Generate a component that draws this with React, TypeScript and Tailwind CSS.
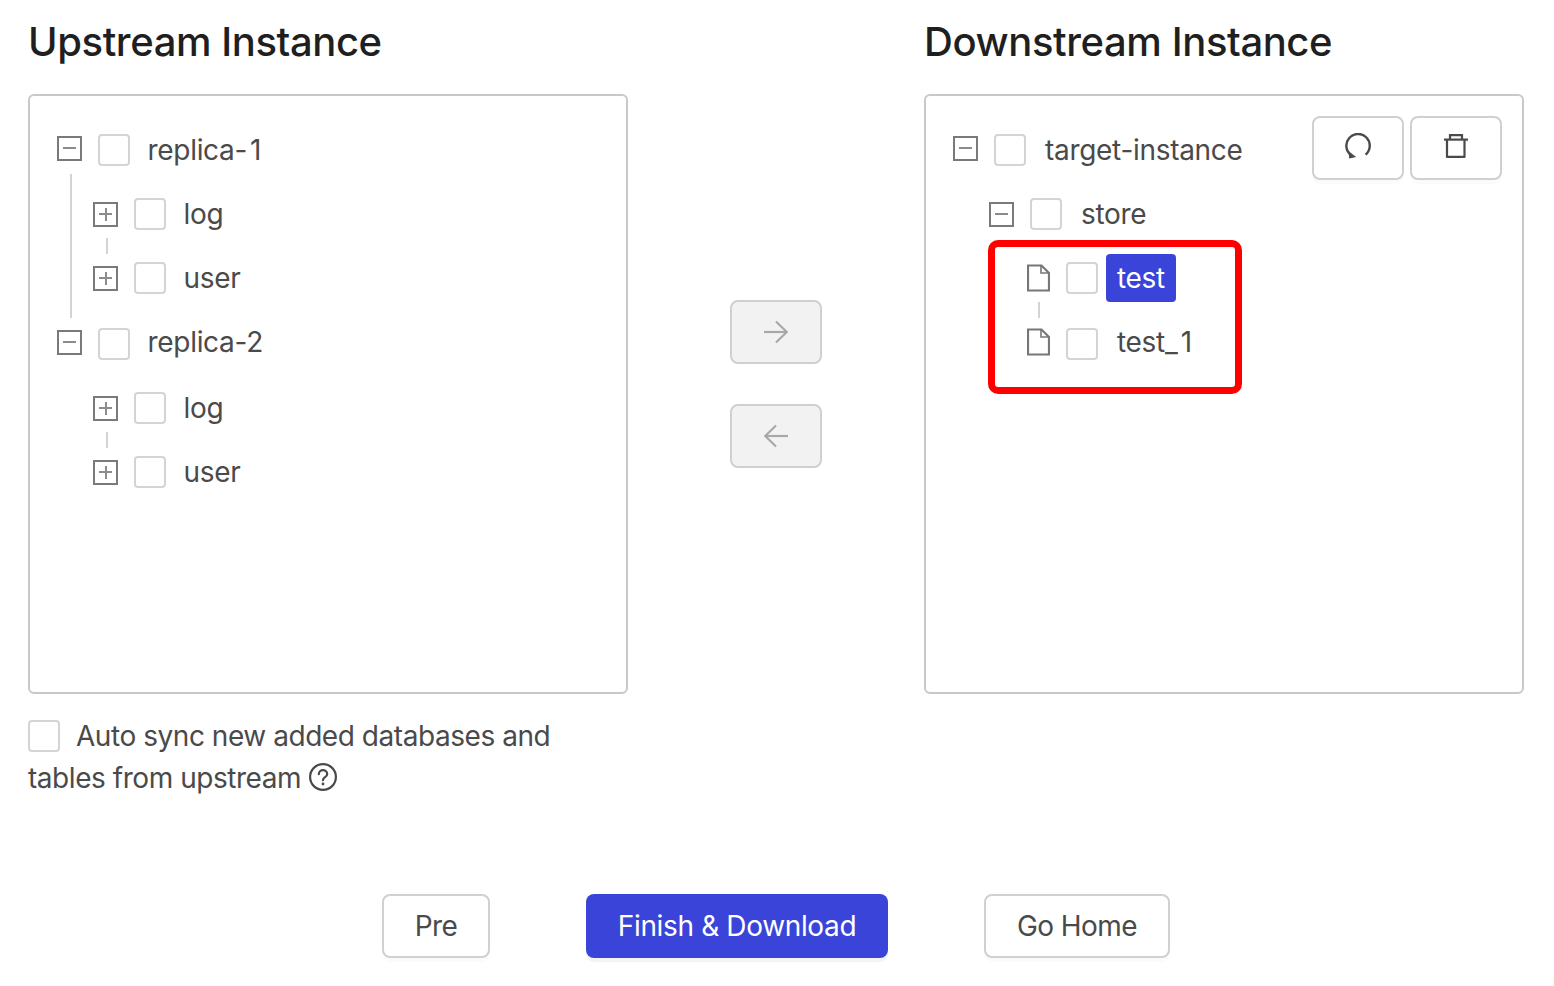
import type { ReactNode } from 'react'

const Checkbox = ({ low }: { low?: boolean }) => (
    <span
        className={
            'box-border block size-8 shrink-0 rounded-[4px] border-2 border-[#d4d4d4] bg-white ' + (low ? 'mt-1' : '')
        }
    />
)

const Switcher = ({ open, raised }: { open: boolean; raised?: boolean }) => (
    <span
        className={
            'relative -ml-px box-border block size-[25px] border-2 border-[#7a7a7a] bg-white ' +
            (raised ? '-mt-1' : '')
        }
    >
        <span className="absolute top-[9.5px] left-[4px] h-[2px] w-[13px] bg-[#8c8c8c]" />
        {!open && <span className="absolute top-[4px] left-[9.5px] h-[13px] w-[2px] bg-[#8c8c8c]" />}
    </span>
)

const FileIcon = () => (
    <svg width="23" height="28" viewBox="0 0 23 28" fill="none" stroke="#777" strokeWidth="2.2" className="ml-px -mt-px">
        <path d="M1 1.5h13.5l7.5 7.5v17.5H1z" />
        <path d="M14 1.5V9h8" strokeWidth="1.6" />
    </svg>
)

const Row = ({
    level,
    label,
    open,
    leaf,
    raised,
    low,
    tight,
    selected,
    className,
}: {
    level: 0 | 1 | 2
    label: ReactNode
    open?: boolean
    leaf?: boolean
    raised?: boolean
    low?: boolean
    tight?: boolean
    selected?: boolean
    className?: string
}) => {
    const indent = level === 0 ? '' : level === 1 ? 'pl-9' : 'pl-[72px]'
    return (
        <div className={'relative flex h-16 items-center ' + indent + ' ' + (className ?? '')}>
            <span className="flex w-10 shrink-0 items-center">
                {leaf ? <FileIcon /> : <Switcher open={!!open} raised={raised} />}
            </span>
            <Checkbox low={low} />
            <span
                className={
                    'flex h-12 items-center rounded-[4px] px-[11px] tracking-[-0.3px] ' +
                    (tight ? 'ml-[6.5px] ' : 'ml-2 ') +
                    (selected ? 'bg-[#3a44d8] text-white' : '')
                }
            >
                {label}
            </span>
        </div>
    )
}

const IconButton = ({ children }: { children: ReactNode }) => (
    <button className="flex h-16 w-[92px] items-center justify-center rounded-lg border-2 border-[#d0d0d0] bg-white shadow-[0_4px_0_rgba(0,0,0,0.015)]">
        {children}
    </button>
)

const MoveButton = ({ children }: { children: ReactNode }) => (
    <button className="flex h-16 w-[92px] items-center justify-center rounded-lg border-2 border-[#d0d0d0] bg-[#f2f2f2]">
        {children}
    </button>
)

const Title = ({ children }: { children: ReactNode }) => (
    <h2 className="mb-[10px] flex h-[84px] items-center text-[40px] font-medium tracking-[-0.41px] text-[#1f1f1f]">
        {children}
    </h2>
)

const panel = 'box-border h-[600px] w-[600px] rounded-md border-2 border-[#c8c8c8] bg-white'

export default function App() {
    return (
        <div
            className="min-h-[986px] bg-white pl-7 text-[28px] text-[#4a4a4a]"
            style={{ fontFamily: 'Inter, "Liberation Sans", sans-serif' }}
        >
            <div className="flex">
                <div className="w-[600px] shrink-0">
                    <Title>Upstream Instance</Title>
                    <div className={panel + ' pt-[22px] pl-7'}>
                        <div className="relative">
                            <span className="absolute top-14 left-3 h-36 w-[2px] bg-[#d4d4d4]" />
                            <Row
                                level={0}
                                open
                                raised
                                tight
                                label={
                                    <>
                                        replica<span className="tracking-[2.5px]">-</span>1
                                    </>
                                }
                            />
                            <Row level={1} label="log" tight />
                            <span className="absolute top-[120px] left-12 h-4 w-[2px] bg-[#d4d4d4]" />
                            <Row level={1} label="user" tight />
                            <Row level={0} label="replica-2" open low tight />
                            <Row level={1} label="log" tight className="mt-[2px]" />
                            <span className="absolute top-[314px] left-12 h-4 w-[2px] bg-[#d4d4d4]" />
                            <Row level={1} label="user" tight />
                        </div>
                    </div>
                    <p className="mt-[21px] leading-[42px] tracking-[-0.45px]">
                        <span className="mr-4 inline-block align-[-6px]">
                            <Checkbox />
                        </span>
                        Auto sync new added databases and tables from upstream{' '}
                        <svg width="28" height="28" viewBox="0 0 28 28" fill="none" stroke="#4a4a4a" strokeWidth="2.2" className="inline-block align-[-3px]">
                            <circle cx="14" cy="14" r="12.9" />
                            <path d="M9.8 11.2c0-2.4 1.9-4 4.2-4s4.2 1.6 4.2 3.8c0 3.3-4.2 3.1-4.2 6.2" strokeLinecap="round" />
                            <circle cx="14" cy="21" r="1.4" fill="#4a4a4a" stroke="none" />
                        </svg>
                    </p>
                </div>

                <div className="flex w-[296px] shrink-0 flex-col items-center gap-10 pt-[300px]">
                    <MoveButton>
                        <svg width="24" height="24" viewBox="0 0 24 24" fill="none" stroke="#a8a8a8" strokeWidth="2.2">
                            <path d="M0 12h22.5" />
                            <path d="M12 1.5L22.8 12 12 22.5" />
                        </svg>
                    </MoveButton>
                    <MoveButton>
                        <svg width="24" height="24" viewBox="0 0 24 24" fill="none" stroke="#a8a8a8" strokeWidth="2.2">
                            <path d="M24 12H1.5" />
                            <path d="M12 1.5L1.2 12 12 22.5" />
                        </svg>
                    </MoveButton>
                </div>

                <div className="w-[600px] shrink-0">
                    <Title>Downstream Instance</Title>
                    <div className={panel + ' relative flex justify-between pt-[22px] pr-5 pl-7'}>
                        <div className="relative flex-1">
                            <Row level={0} label="target-instance" open raised />
                            <Row level={1} label="store" open />
                            <Row level={2} label="test" leaf selected />
                            <span className="absolute top-[184px] left-[84px] h-4 w-[2px] bg-[#d4d4d4]" />
                            <Row
                                level={2}
                                leaf
                                low
                                label={
                                    <>
                                        test<span className="tracking-[3px]">_</span>
                                        <span className="tracking-normal">1</span>
                                    </>
                                }
                            />
                        </div>
                        <div className="-mt-[2px] flex gap-[6px] self-start">
                            <IconButton>
                                <svg width="26" height="26" viewBox="0 0 26 26" fill="none" stroke="#4a4a4a" strokeWidth="2.4" className="-mt-1">
                                    <path d="M20.6 21.6A11.7 11.7 0 1 0 6 22" />
                                    <path d="M3.6 18.2l.6 7.4 7-1.6z" fill="#4a4a4a" stroke="none" />
                                </svg>
                            </IconButton>
                            <IconButton>
                                <svg width="24" height="24" viewBox="0 0 24 24" fill="none" stroke="#4a4a4a" strokeWidth="2.2" className="-mt-1">
                                    <path d="M0 5.6h24" />
                                    <path d="M6 5.4V1.1h12v4.3" />
                                    <path d="M3 6v16.9h17.5V6" strokeLinejoin="round" />
                                </svg>
                            </IconButton>
                        </div>
                        {/* annotation drawn over the screenshot */}
                        <div className="absolute top-[144px] left-[62px] h-[154px] w-[254px] rounded-[10px] border-[7px] border-[#ff0000]" />
                    </div>
                </div>
            </div>

            <div className="mt-[95px] flex w-[1496px] justify-center gap-24">
                <button className="h-16 w-[108px] rounded-lg border-2 border-[#d0d0d0] bg-white tracking-[-0.55px] shadow-[0_4px_0_rgba(0,0,0,0.015)]">
                    Pre
                </button>
                <button className="h-16 w-[302px] rounded-lg bg-[#3a44d8] tracking-[-0.35px] text-white shadow-[0_4px_0_rgba(0,0,0,0.045)]">
                    Finish &amp; Download
                </button>
                <button className="h-16 w-[186px] rounded-lg border-2 border-[#d0d0d0] bg-white tracking-[-0.55px] shadow-[0_4px_0_rgba(0,0,0,0.015)]">
                    Go Home
                </button>
            </div>
        </div>
    )
}
